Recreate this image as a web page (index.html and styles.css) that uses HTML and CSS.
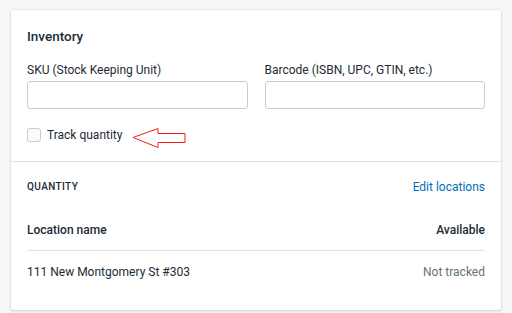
FILE: index.html
```html
<!DOCTYPE html>
<html lang="en">
<head>
    <meta charset="UTF-8">
    <meta name="viewport" content="width=device-width, initial-scale=1.0">
    <title>Inventory</title>
    <link rel="stylesheet" href="styles.css">
</head>
<body>

    <div class="card">
        <div class="section">
            <h2 class="title">Inventory</h2>

            <div class="fields">
                <div class="field">
                    <label for="sku">SKU (Stock Keeping Unit)</label>
                    <input type="text" id="sku">
                </div>
                <div class="field">
                    <label for="barcode">Barcode (ISBN, UPC, GTIN, etc.)</label>
                    <input type="text" id="barcode">
                </div>
            </div>

            <div class="track">
                <label class="check">
                    <input type="checkbox">
                    <span class="box"></span>
                    <span>Track quantity</span>
                </label>
                <svg class="arrow" width="56" height="22" viewBox="0 0 56 22">
                    <polygon points="1,10.5 26,1.5 26,6.5 53,6.5 53,15.5 26,15.5 26,20.5" fill="none" stroke="#ee1c1c" stroke-width="1"/>
                </svg>
            </div>
        </div>

        <div class="section quantity">
            <div class="quantity-head">
                <h3 class="subtitle">QUANTITY</h3>
                <a href="#" class="link">Edit locations</a>
            </div>

            <div class="row head">
                <span>Location name</span>
                <span>Available</span>
            </div>
            <div class="row">
                <span>111 New Montgomery St #303</span>
                <span class="muted">Not tracked</span>
            </div>
        </div>
    </div>

</body>
</html>
```

FILE: styles.css
```css
body {
    margin: 0;
    padding: 10px 11px;
    background-color: #f4f6f8;
    font-family: Roboto, "Noto Sans", sans-serif;
    font-size: 12px;
    line-height: 16px;
    color: #212b36;
}
.card {
    background-color: white;
    border-radius: 3px;
    box-shadow: 0 0 0 1px rgba(63, 63, 68, 0.05), 0 1px 3px 0 rgba(63, 63, 68, 0.15);
}
.section {
    padding: 17px 16px 12px;
}
.title {
    margin: 0 0 17px;
    font-size: 13.5px;
    font-weight: 500;
    line-height: 18px;
}
.fields {
    display: flex;
    gap: 17px;
}
.field {
    flex: 1;
    display: flex;
    flex-direction: column;
}
.field label {
    margin-bottom: 3px;
}
.field input {
    height: 28px;
    box-sizing: border-box;
    border: 1px solid #c4cdd5;
    border-radius: 3px;
    margin: 0;
}
.track {
    display: flex;
    align-items: flex-start;
    margin-top: 18px;
    gap: 10px;
}
.check {
    display: flex;
    align-items: center;
    gap: 6px;
}
.check input {
    display: none;
}
.box {
    width: 12px;
    height: 12px;
    border: 1px solid #c4cdd5;
    border-radius: 3px;
    background-color: #fafbfb;
}
.quantity {
    border-top: 1px solid #dfe3e8;
    padding-top: 17px;
    padding-bottom: 18px;
}
.quantity-head {
    display: flex;
    justify-content: space-between;
    align-items: center;
    margin-bottom: 15px;
}
.subtitle {
    margin: 0;
    font-size: 10px;
    font-weight: 500;
    letter-spacing: 0.4px;
}
.link {
    color: #006fbb;
    text-decoration: none;
}
.row {
    display: flex;
    justify-content: space-between;
    padding: 13px 0 12px;
}
.row.head {
    font-weight: 500;
    border-bottom: 1px solid #dfe3e8;
    padding: 12px 0;
}
.muted {
    color: #637381;
}
```
